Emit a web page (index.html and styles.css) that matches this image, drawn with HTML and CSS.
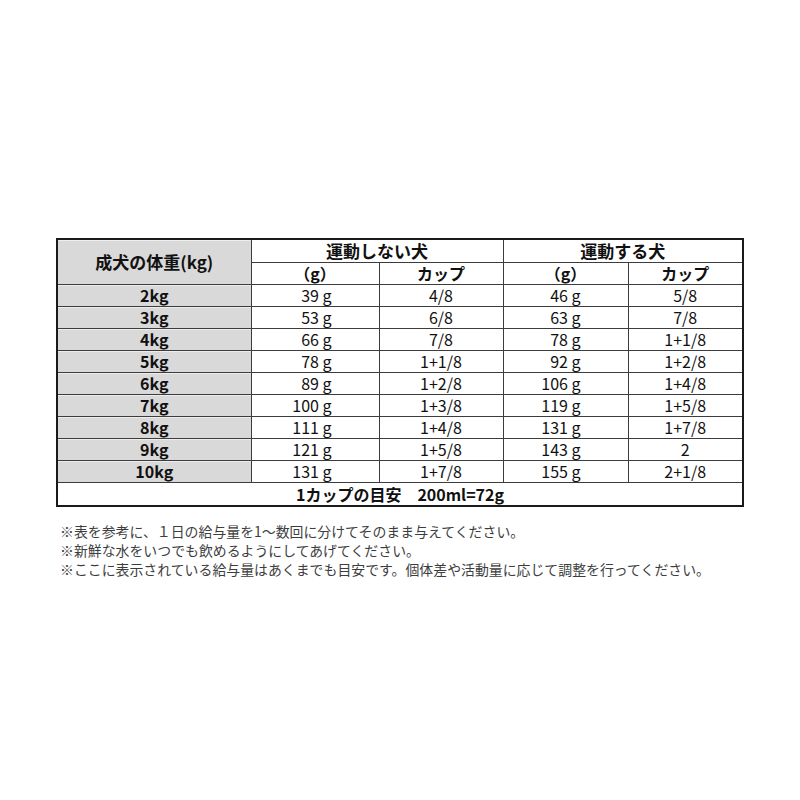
FILE: index.html
```html
<!DOCTYPE html>
<html lang="ja">
<head>
<meta charset="utf-8">
<link rel="stylesheet" href="styles.css">
</head>
<body>
<div class="page">
  <table class="feed">
    <colgroup>
      <col class="c1"><col class="c2"><col class="c3"><col class="c4"><col class="c5">
    </colgroup>
    <thead>
      <tr class="h1">
        <th class="weight-head" rowspan="2">成犬の体重(kg)</th>
        <th colspan="2">運動しない犬</th>
        <th colspan="2">運動する犬</th>
      </tr>
      <tr class="h2">
        <th>（g）</th><th>カップ</th><th>（g）</th><th>カップ</th>
      </tr>
    </thead>
    <tbody>
      <tr><th>2kg</th><td class="g">39 g</td><td>4/8</td><td class="g">46 g</td><td>5/8</td></tr>
      <tr><th>3kg</th><td class="g">53 g</td><td>6/8</td><td class="g">63 g</td><td>7/8</td></tr>
      <tr><th>4kg</th><td class="g">66 g</td><td>7/8</td><td class="g">78 g</td><td>1+1/8</td></tr>
      <tr><th>5kg</th><td class="g">78 g</td><td>1+1/8</td><td class="g">92 g</td><td>1+2/8</td></tr>
      <tr><th>6kg</th><td class="g">89 g</td><td>1+2/8</td><td class="g">106 g</td><td>1+4/8</td></tr>
      <tr><th>7kg</th><td class="g">100 g</td><td>1+3/8</td><td class="g">119 g</td><td>1+5/8</td></tr>
      <tr><th>8kg</th><td class="g">111 g</td><td>1+4/8</td><td class="g">131 g</td><td>1+7/8</td></tr>
      <tr><th>9kg</th><td class="g">121 g</td><td>1+5/8</td><td class="g">143 g</td><td>2</td></tr>
      <tr><th>10kg</th><td class="g">131 g</td><td>1+7/8</td><td class="g">155 g</td><td>2+1/8</td></tr>
      <tr class="foot"><td colspan="5">1カップの目安　200ml=72g</td></tr>
    </tbody>
  </table>
  <div class="notes">
    <p>※表を参考に、１日の給与量を1～数回に分けてそのまま与えてください。</p>
    <p>※新鮮な水をいつでも飲めるようにしてあげてください。</p>
    <p>※ここに表示されている給与量はあくまでも目安です。個体差や活動量に応じて調整を行ってください。</p>
  </div>
</div>
</body>
</html>
```

FILE: styles.css
```css
html, body {
  margin: 0;
  padding: 0;
  background: #ffffff;
}

.page {
  padding: 238px 0 0 56px;
  font-family: "Noto Sans CJK JP", "Liberation Sans", sans-serif;
  color: #111111;
}

.feed {
  border-collapse: collapse;
  table-layout: fixed;
  width: 686px;
  border: 2px solid #1a1a1a;
}

.c1 { width: 194px; }
.c2 { width: 128px; }
.c3 { width: 124px; }
.c4 { width: 125px; }
.c5 { width: 115px; }

.feed th,
.feed td {
  border: 1px solid #3c3c3c;
  padding: 0;
  height: 21px;
  line-height: 21px;
  text-align: center;
  font-size: 16px;
  white-space: nowrap;
}

.feed thead th {
  font-size: 16px;
  font-weight: 700;
  background: #ffffff;
}

.feed thead .h1 th {
  font-size: 17px;
  height: 22px;
  line-height: 22px;
}

.feed thead th.weight-head {
  background: #d9d9d9;
  box-shadow: inset 0 1px 0 #eeeeee;
}

.feed tbody th {
  background: #d9d9d9;
  font-weight: 700;
  box-shadow: inset 0 1px 0 #eeeeee;
}

.feed td {
  font-weight: 400;
}

.feed td.g {
  text-align: right;
  padding-right: 47px;
}

.feed .foot td {
  font-weight: 700;
  font-size: 16px;
  height: 22px;
  line-height: 22px;
}

.notes {
  margin-top: 15px;
  padding-left: 4px;
  color: #3d3d3d;
  font-size: 13.9px;
  line-height: 19px;
}

.notes p {
  margin: 0;
}
```
